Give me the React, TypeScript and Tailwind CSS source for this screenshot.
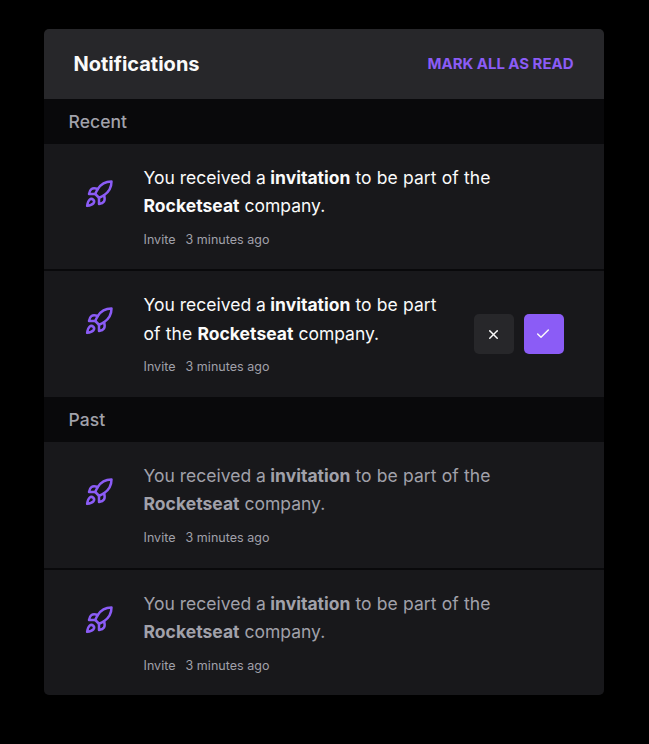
import React from "react";
import { Check, Rocket, X } from "lucide-react";

function Item({ muted = false, actions = false, last = false }: { muted?: boolean; actions?: boolean; last?: boolean }) {
  return (
    <div className={last ? "flex items-start rounded-b-[5px] bg-[#18181b] px-10 py-5" : "flex items-start bg-[#18181b] px-10 py-5"}>
      <Rocket className="mt-[15px] h-[30px] w-[30px] shrink-0 text-[#8b5cf6]" strokeWidth={2} />
      <div className="ml-[29.5px] flex-1">
        <p className={muted ? "w-[360px] text-[17.5px] leading-[28.4375px] text-[#a1a1aa]" : actions ? "w-[310px] text-[17.5px] leading-[28.4375px] text-[#fafafa]" : "w-[360px] text-[17.5px] leading-[28.4375px] text-[#fafafa]"}>
          You received a <strong className="-ml-[0.5px] font-bold">invitation</strong>
          <span className="tracking-[0.12px]"> to be part of the </span>
          <strong className="font-bold tracking-[0.03px]">Rocketseat</strong> company.
        </p>
        <div className="mt-[10px] flex gap-[10px] text-[12.5px] leading-[18.75px] tracking-[0.03px] text-[#a1a1aa]">
          <span>Invite</span>
          <span>3 minutes ago</span>
        </div>
      </div>
      {actions && (
        <div className="flex gap-[10px] self-center">
          <button className="flex h-10 w-10 items-center justify-center rounded-[5px] bg-[#27272a] pr-px pt-px text-[#fafafa]"><X size={15} strokeWidth={2.4} /></button>
          <button className="flex h-10 w-10 items-center justify-center rounded-[5px] bg-[#8b5cf6] pr-[2px] text-[#fafafa]"><Check size={16} strokeWidth={2.2} /></button>
        </div>
      )}
    </div>
  );
}

function Section({ title, children }: { title: string; children: React.ReactNode }) {
  return (
    <section>
      <div className="h-[45px] bg-[#09090b] px-[24.5px] text-[17.5px] font-medium leading-[45px] tracking-[0.05px] text-[#a1a1aa]">{title}</div>
      <div className="flex flex-col gap-[2px] rounded-b-[5px] bg-[#09090b]">{children}</div>
    </section>
  );
}

export default function App() {
  return (
    <main className="h-[744px] bg-black pt-[28.8px] font-['Inter',sans-serif]">
      <div className="ml-[44px] w-[560px]">
        <header className="flex h-[70px] items-center justify-between rounded-t-[5px] bg-[#27272a] pl-[29.5px] pr-[30.5px]">
          <h1 className="text-[20px] font-bold text-[#fafafa]">Notifications</h1>
          <button className="text-[15px] font-bold tracking-[-0.03px] text-[#8b5cf6]">MARK ALL AS READ</button>
        </header>
        <Section title="Recent">
          <Item />
          <Item actions />
        </Section>
        <Section title="Past">
          <Item muted />
          <Item muted last />
        </Section>
      </div>
    </main>
  );
}
